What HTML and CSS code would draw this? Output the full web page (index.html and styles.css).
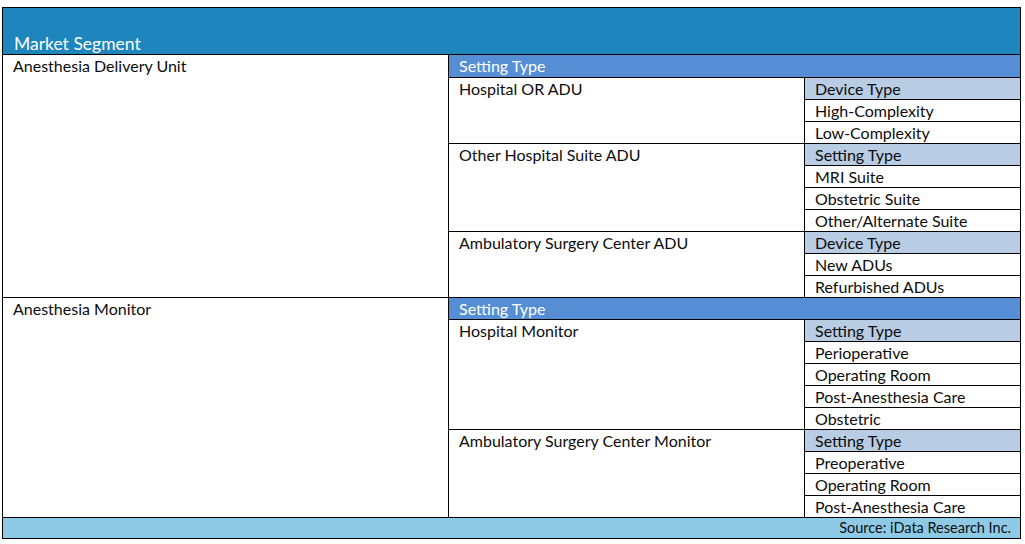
FILE: index.html
```html
<!DOCTYPE html>
<html>
<head>
<meta charset="utf-8">
<link rel="stylesheet" href="styles.css">
</head>
<body>
<div class="wrap">
<table class="seg">
  <colgroup><col class="c1"><col class="c2"><col class="c3"></colgroup>
  <tr class="head"><td colspan="3">Market Segment</td></tr>
  <tr><td class="seg1" rowspan="11">Anesthesia Delivery Unit</td><td class="mid" colspan="2">Setting Type</td></tr>
  <tr><td class="seg2" rowspan="3">Hospital OR ADU</td><td class="lt">Device Type</td></tr>
  <tr><td>High-Complexity</td></tr>
  <tr><td>Low-Complexity</td></tr>
  <tr><td class="seg2" rowspan="4">Other Hospital Suite ADU</td><td class="lt">Setting Type</td></tr>
  <tr><td>MRI Suite</td></tr>
  <tr><td>Obstetric Suite</td></tr>
  <tr><td>Other/Alternate Suite</td></tr>
  <tr><td class="seg2" rowspan="3">Ambulatory Surgery Center ADU</td><td class="lt">Device Type</td></tr>
  <tr><td>New ADUs</td></tr>
  <tr><td>Refurbished ADUs</td></tr>
  <tr><td class="seg1" rowspan="10">Anesthesia Monitor</td><td class="mid mid2" colspan="2">Setting Type</td></tr>
  <tr><td class="seg2" rowspan="5">Hospital Monitor</td><td class="lt">Setting Type</td></tr>
  <tr><td>Perioperative</td></tr>
  <tr><td>Operating Room</td></tr>
  <tr><td>Post-Anesthesia Care</td></tr>
  <tr><td>Obstetric</td></tr>
  <tr><td class="seg2" rowspan="4">Ambulatory Surgery Center Monitor</td><td class="lt">Setting Type</td></tr>
  <tr><td>Preoperative</td></tr>
  <tr><td>Operating Room</td></tr>
  <tr><td>Post-Anesthesia Care</td></tr>
  <tr class="foot"><td colspan="3">Source: iData Research Inc.</td></tr>
</table>
</div>
</body>
</html>
```
FILE: styles.css
```css
html, body { margin: 0; padding: 0; background: #fff; }
.wrap { padding: 7px 0 0 2px; }
.seg {
  border-collapse: collapse;
  width: 1018px;
  table-layout: fixed;
  font-family: Lato, "Open Sans", sans-serif;
  font-size: 16px;
  color: #0d0d0d;
  border: 1px solid #000;
}
.c1 { width: 446px; }
.c2 { width: 356px; }
.c3 { width: 216px; }
.seg td {
  border: 1px solid #000;
  height: 21px;
  padding: 0 0 0 10px;
  vertical-align: top;
  line-height: 21px;
  white-space: nowrap;
}
.seg td.seg1, .seg td.seg2 { height: auto; }
.head td {
  background: #1f85bd;
  color: #fff;
  height: 46px;
  vertical-align: bottom;
  line-height: 20px;
  font-size: 17.5px;
  padding-left: 11px;
}
.seg td.mid { background: #558ed5; color: #fff; height: 22px; line-height: 22px; }
.seg td.mid2 { height: 21px; line-height: 21px; }
.seg td.lt { background: #b8cce4; }
.foot td {
  background: #8ecae6;
  text-align: right;
  padding: 0 9px 0 0;
  font-size: 14.5px;
  height: 20px;
  line-height: 20px;
}
```
